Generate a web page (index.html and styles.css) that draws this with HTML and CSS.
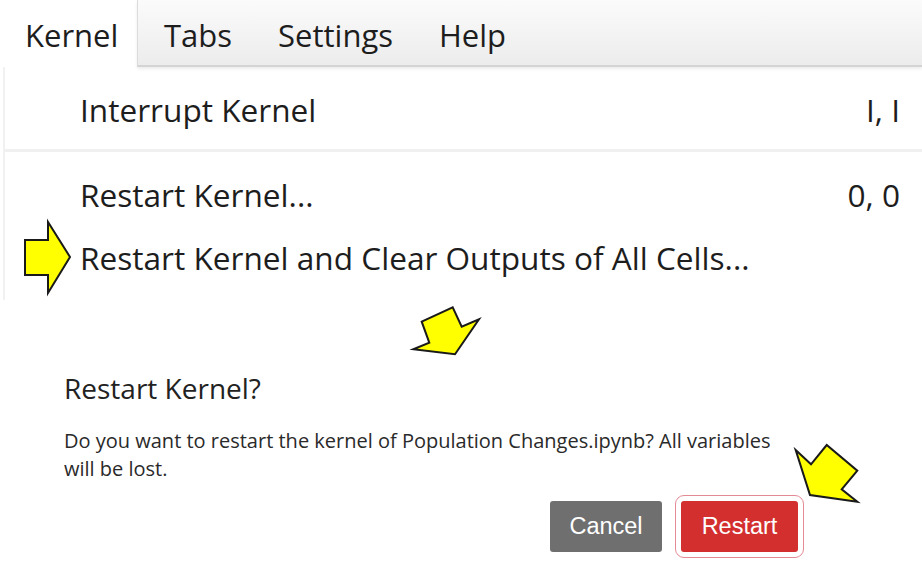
FILE: index.html
```html
<!DOCTYPE html>
<html>
<head>
<meta charset="utf-8">
<link rel="stylesheet" href="styles.css">
</head>
<body>
<div class="page">
  <div class="menubar">
    <div class="tab active">Kernel</div>
    <div class="tabs-rest">
      <div class="tab">Tabs</div>
      <div class="tab">Settings</div>
      <div class="tab">Help</div>
    </div>
  </div>
  <div class="menu">
    <div class="item first"><span class="label">Interrupt Kernel</span><span class="key">I, I</span></div>
    <div class="sep"></div>
    <div class="item"><span class="label">Restart Kernel...</span><span class="key">0, 0</span></div>
    <div class="item"><span class="label">Restart Kernel and Clear Outputs of All Cells...</span></div>
  </div>
  <div class="dialog">
    <div class="title">Restart Kernel?</div>
    <div class="body">Do you want to restart the kernel of Population Changes.ipynb? All variables will be lost.</div>
    <div class="buttons">
      <button class="btn cancel">Cancel</button>
      <span class="focus-ring"><button class="btn restart">Restart</button></span>
    </div>
  </div>
  <svg class="arrows" width="922" height="571" viewBox="0 0 922 571">
    <polygon points="25,240 48,240 48,222 70,257 48,293 48,275 25,275" />
    <polygon points="421.7,321.7 452.7,307.3 461.7,326.7 479,319.3 455,354.3 413.3,349.3 429.3,342.7" />
    <polygon points="795.7,450 811,464.3 826.7,445 857.3,470.7 841.7,489.3 857.3,501.7 810,495" />
  </svg>
</div>
</body>
</html>
```
FILE: styles.css
```css
html, body {
  margin: 0;
  padding: 0;
  background: #fff;
}
.page {
  position: relative;
  width: 922px;
  height: 571px;
  overflow: hidden;
  font-family: "Open Sans", "Noto Sans", sans-serif;
  color: #1d1d1d;
}
.menubar {
  display: flex;
  height: 67px;
}
.tab {
  font-size: 31px;
  line-height: 1;
  padding-top: 20px;
}
.tab.active {
  width: 137px;
  padding-left: 25px;
  box-sizing: border-box;
  background: #fff;
}
.tabs-rest {
  flex: 1;
  display: flex;
  gap: 46px;
  padding-left: 26px;
  background: linear-gradient(#fbfbfb, #ececec);
  border-left: 1px solid #dcdcdc;
  border-bottom: 2px solid #d4d4d4;
  box-shadow: 0 2px 3px rgba(0,0,0,0.08);
  box-sizing: border-box;
}
.menu {
  margin-left: 3px;
  border-left: 2px solid #f1f1f1;
  height: 233px;
  box-sizing: border-box;
  padding-top: 22px;
}
.item {
  display: flex;
  justify-content: space-between;
  align-items: center;
  padding-left: 75px;
  padding-right: 22px;
  font-size: 31.6px;
  height: 40px;
}
.item + .item {
  margin-top: 23px;
}
.sep {
  height: 3px;
  background: #f0f0f0;
  margin: 20px 0 22px;
}
.dialog {
  padding-left: 64px;
  padding-top: 72px;
}
.title {
  font-size: 28px;
  line-height: 32px;
  color: #222;
}
.body {
  margin-top: 23px;
  width: 725px;
  font-size: 20px;
  line-height: 28px;
  color: #2a2a2a;
}
.buttons {
  display: flex;
  align-items: center;
  gap: 13px;
  margin-top: 12px;
  padding-left: 486px;
}
.btn {
  border: none;
  border-radius: 3px;
  color: #fff;
  font-family: "Liberation Sans", Arial, sans-serif;
  font-size: 23.5px;
  height: 51px;
  padding: 0;
}
.cancel {
  width: 112px;
  background: #6f6f6f;
}
.focus-ring {
  display: inline-flex;
  padding: 5px;
  border: 1.5px solid #e38a95;
  border-radius: 9px;
}
.restart {
  width: 117px;
  background: #d32f2f;
}
.arrows {
  position: absolute;
  left: 0;
  top: 0;
  pointer-events: none;
}
.arrows polygon {
  fill: #ffff00;
  stroke: #1a1a1a;
  stroke-width: 2;
  stroke-linejoin: miter;
}
```
